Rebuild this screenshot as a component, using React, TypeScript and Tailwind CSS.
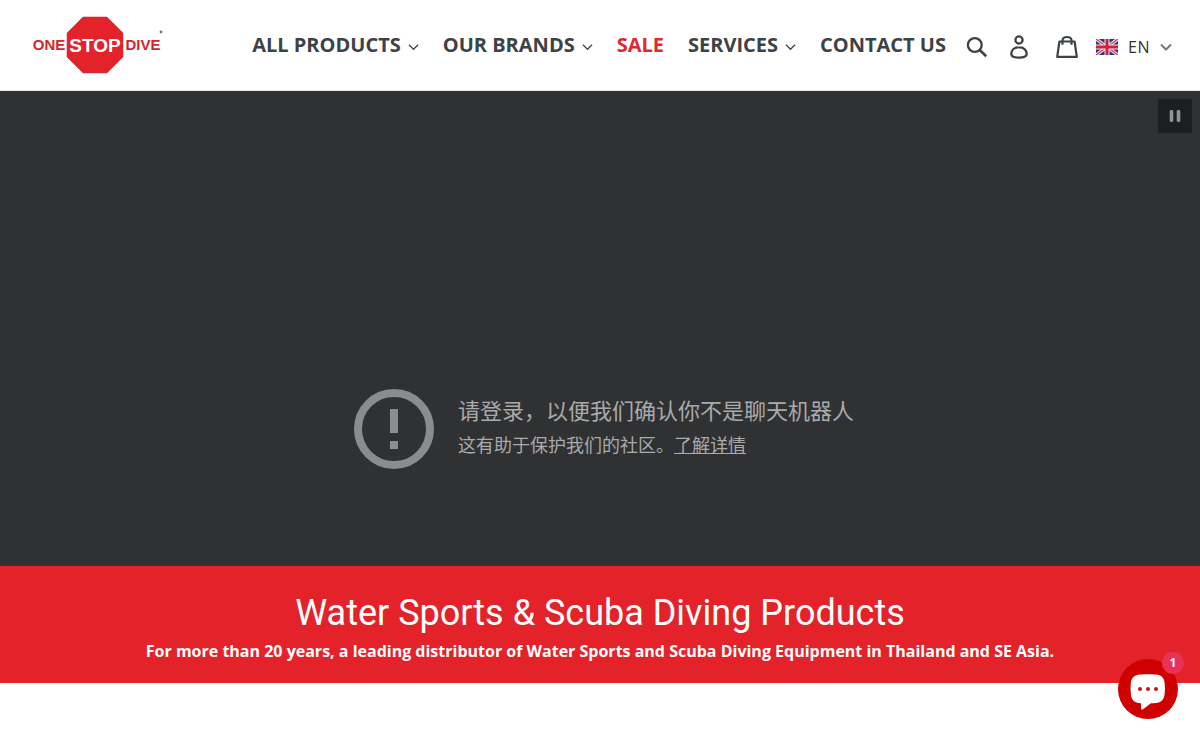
import React, { useState } from 'react'

const navItems = [
    { label: 'ALL PRODUCTS', menu: true },
    { label: 'OUR BRANDS', menu: true },
    { label: 'SALE', sale: true },
    { label: 'SERVICES', menu: true },
    { label: 'CONTACT US' },
]

const Logo = () => (
    <svg viewBox="0 0 132 60" className="h-[60px] w-[132px]" role="img" aria-label="One Stop Dive">
        <polygon points="51,2 75,2 91,18 91,42 75,58 51,58 35,42 35,18" fill="#e32229" stroke="#b4474a" strokeWidth="0.6" />
        <g fontFamily="'Liberation Sans', sans-serif" fontWeight="700" textAnchor="middle">
            <text x="17" y="35" fontSize="15" fill="#d3262c">ONE</text>
            <text x="63" y="37" fontSize="19" fill="#ffffff">STOP</text>
            <text x="111" y="35" fontSize="15" fill="#d3262c">DIVE</text>
        </g>
        <circle cx="129" cy="17" r="1.4" fill="#777" />
    </svg>
)

const Chevron = ({ className }: { className: string }) => (
    <svg viewBox="0 0 12 8" className={className} fill="none" stroke="currentColor" aria-hidden="true">
        <path d="M1 1.5l5 5 5-5" />
    </svg>
)

const UkFlag = () => (
    <svg viewBox="0 0 22 16" className="h-4 w-[22px] shrink-0" aria-hidden="true">
        <rect width="22" height="16" fill="#2a3583" />
        <path d="M0 0l22 16M22 0L0 16" stroke="#e9dfea" strokeWidth="3.4" />
        <path d="M0 0l22 16M22 0L0 16" stroke="#d2405a" strokeWidth="1.2" />
        <path d="M11 0v16M0 8h22" stroke="#f3e6ec" strokeWidth="5" />
        <path d="M11 0v16M0 8h22" stroke="#d2203a" strokeWidth="3" />
    </svg>
)

const Header = () => {
    const [lang, setLang] = useState('EN')

    return (
        <header className="flex h-[91px] items-center justify-between border-b border-[#e8e9eb] bg-white pr-7 pl-8">
            <a href="#home"><Logo /></a>
            <div className="flex items-center">
                <nav className="mr-5 flex items-center gap-6 text-xl font-bold whitespace-nowrap text-[#3d4246]">
                    {navItems.map((item) =>
                        item.menu ? (
                            <button key={item.label} type="button" className="flex items-center gap-[7px]">
                                {item.label}
                                <Chevron className="mt-1 h-2 w-[11px] stroke-[1.3]" />
                            </button>
                        ) : (
                            <a key={item.label} href="#nav" className={item.sale ? 'text-[#dd2a30]' : ''}>
                                {item.label}
                            </a>
                        )
                    )}
                </nav>

                {/* icons */}
                <div className="mt-1 flex items-center gap-[22px] text-[#3d4246]">
                    <button type="button" aria-label="Search">
                        <svg viewBox="0 0 22 22" className="h-[22px] w-[22px]" fill="none" stroke="currentColor" strokeWidth="2.3">
                            <circle cx="8.8" cy="9" r="6.9" />
                            <path d="M13.8 14l6.400 6.200" strokeWidth="2.6" />
                        </svg>
                    </button>
                    <a href="#account" aria-label="Log in">
                        <svg viewBox="0 0 18 24" className="h-6 w-[18px]" fill="none" stroke="currentColor" strokeWidth="2.3">
                            <circle cx="9" cy="5" r="3.6" />
                            <path d="M9 12.2c-4.5 0-7.700 2.800-7.700 6.800 0 2.600 2.500 3.600 7.700 3.600s7.700-1 7.700-3.600c0-4-3.200-6.800-7.700-6.800z" />
                        </svg>
                    </a>
                    <a href="#cart" aria-label="Cart" className="ml-[6px]">
                        <svg viewBox="0 0 22 24" className="h-6 w-[22px]" fill="none" stroke="currentColor" strokeWidth="2.2" strokeLinejoin="round">
                            <path d="M3.4 6.5h15.2l2.2 15.3H1.2z" />
                            <path d="M6.5 9.8V5.5C6.5 3.2 8.3 2 11 2s4.5 1.2 4.5 3.5v4.3" />
                        </svg>
                    </a>
                </div>

                <label className="mt-1 ml-[18px] flex items-center text-[#777]">
                    <UkFlag />
                    <select
                        value={lang}
                        onChange={(e) => setLang(e.target.value)}
                        aria-label="Language"
                        className="ml-[10px] w-8 appearance-none bg-transparent text-base tracking-[0.5px] text-[#333]"
                    >
                        <option value="EN">EN</option>
                        <option value="TH">TH</option>
                    </select>
                    <Chevron className="h-2 w-3 stroke-2" />
                </label>
            </div>
        </header>
    )
}

const VideoBanner = () => {
    const [paused, setPaused] = useState(false)

    return (
        <section className="flex h-[475px] flex-col bg-[#303133]">
            <button
                type="button"
                aria-label={paused ? 'Play video' : 'Pause video'}
                onClick={() => setPaused(!paused)}
                className="mt-2 mr-2 flex h-[34px] w-[34px] items-center justify-center self-end bg-[#1d1e1f]"
            >
                <svg viewBox="0 0 12 12" className="h-3 w-3" fill="#929394">
                    <rect x="0.7" width="3.6" height="12" rx="1.4" />
                    <rect x="7.7" width="3.6" height="12" rx="1.4" />
                </svg>
            </button>
            <div className="mx-auto mt-64 flex w-full max-w-[492px] items-center gap-6 text-[#a9aaab]">
                <svg viewBox="0 0 80 80" className="h-20 w-20 shrink-0" fill="#8b8c8e" aria-hidden="true">
                    <circle cx="40" cy="40" r="36" fill="none" stroke="#8b8c8e" strokeWidth="8" />
                    <path d="M36 20h8v24h-8zM36 52h8v8h-8z" />
                </svg>
                <div className="pb-[6px] whitespace-nowrap">
                    <p className="text-[22px] leading-[38px]">请登录，以便我们确认你不是聊天机器人</p>
                    <p className="text-lg leading-8">
                        这有助于保护我们的社区。<a href="#help" className="underline">了解详情</a>
                    </p>
                </div>
            </div>
        </section>
    )
}

const ChatButton = () => (
    <button
        type="button"
        aria-label="Open chat, 1 new message"
        className="fixed right-[22px] bottom-[21px] flex h-[60px] w-[60px] items-center justify-center rounded-full bg-[#d10000]"
    >
        <svg viewBox="0 0 36 36" className="mt-[6px] h-9 w-9" aria-hidden="true">
            <path d="M10 0.5C17 0 20 0 26 0.5c5 0.3 8 3 8.600 8 .5 4 .5 8 0 12-.6 5-3.600 8-8.600 8.500-2 .2-3.500.3-5 .3l-8 6c-1 .7-2 .2-2-1v-5C4 29 1.500 26 .9 20.500c-.5-4-.5-8 0-12 .6-5 4.100-7.700 9.100-8z" fill="#fff" />
            <circle cx="10" cy="15" r="2" fill="#c8141a" />
            <circle cx="18" cy="15" r="2" fill="#c8141a" />
            <circle cx="26" cy="15" r="2" fill="#c8141a" />
        </svg>
        <span className="absolute -top-[7px] -right-[6px] flex h-[22px] w-[22px] items-center justify-center rounded-full bg-[#ea3158] text-xs font-bold text-white">
            1
        </span>
    </button>
)

const App = () => {
    return (
        <div className="min-h-screen bg-white font-['Open_Sans','Noto_Sans_CJK_SC',sans-serif]">
            <Header />
            <main>
                <VideoBanner />
                <section className="bg-[#e32229] px-8 pt-6 pb-4 text-center text-white">
                    <h1 className="font-[Roboto,sans-serif] text-4xl leading-[46px]">Water Sports &amp; Scuba Diving Products</h1>
                    <p className="text-base leading-[31px] font-bold">
                        For more than 20 years, a leading distributor of Water Sports and Scuba Diving Equipment in Thailand and SE Asia.
                    </p>
                </section>
            </main>
            <ChatButton />
        </div>
    )
}

export default App
